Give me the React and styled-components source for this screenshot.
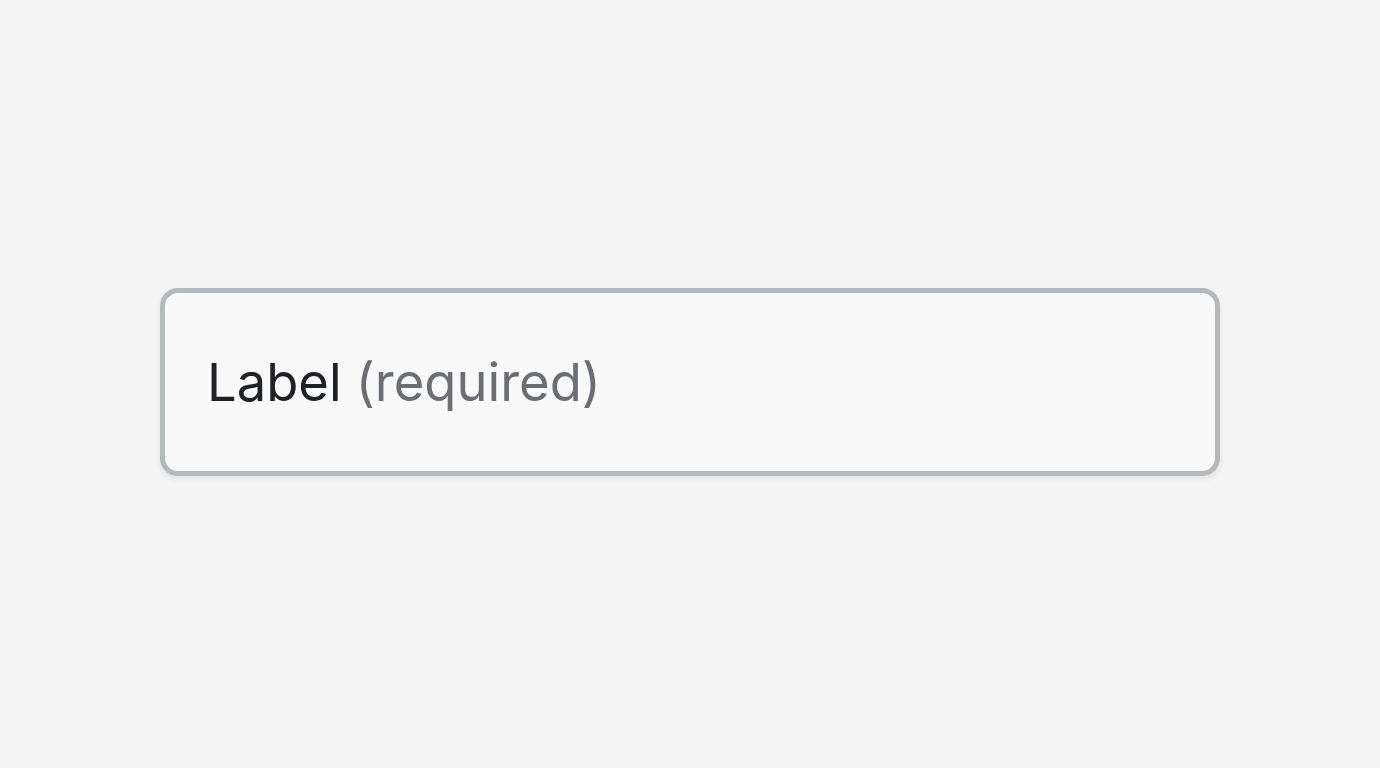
import React from "react";
import styled, { createGlobalStyle } from "styled-components";

const Global = createGlobalStyle`
  html, body { margin: 0; padding: 0; background: #f4f4f4; }
  body { font-family: Inter, "Noto Sans", sans-serif; }
`;

const Page = styled.div`
  width: 100%;
  height: 768px;
  display: flex;
  align-items: center;
  justify-content: center;
  padding-bottom: 4px;
  box-sizing: border-box;
`;

const Field = styled.div`
  box-sizing: border-box;
  width: 1060px;
  height: 188px;
  border: 5px solid #b4b9bd;
  border-radius: 18px;
  background: #f9f9f9;
  box-shadow: 0 3px 6px rgba(0, 0, 0, 0.08);
  display: flex;
  align-items: center;
  padding: 0 42px;
`;

const Label = styled.span`
  font-size: 52.5px;
  color: #202124;
`;

const Hint = styled.span`
  font-size: 52.5px;
  color: #6b6e72;
  margin-left: 14px;
`;

export default function App() {
  return (
    <>
      <Global />
      <Page>
        <Field>
          <Label>Label</Label>
          <Hint>(required)</Hint>
        </Field>
      </Page>
    </>
  );
}
